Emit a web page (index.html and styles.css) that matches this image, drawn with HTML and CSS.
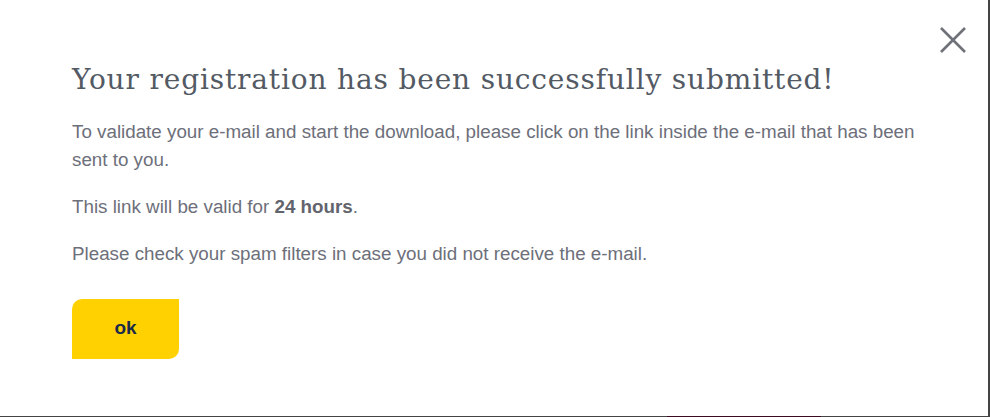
FILE: index.html
```html
<!DOCTYPE html>
<html lang="en">
<head>
<meta charset="utf-8">
<link rel="stylesheet" href="styles.css">
</head>
<body>
<div class="modal">
  <button class="close" aria-label="Close">
    <svg width="26" height="26" viewBox="0 0 26 26"><path d="M1 1 L25 25 M25 1 L1 25" stroke="#6f7178" stroke-width="2.6" fill="none"/></svg>
  </button>
  <h1 class="title">Your registration has been successfully submitted!</h1>
  <p class="text">To validate your e-mail and start the download, please click on the link inside the e-mail that has been sent to you.</p>
  <p class="text">This link will be valid for <strong>24 hours</strong>.</p>
  <p class="text">Please check your spam filters in case you did not receive the e-mail.</p>
  <button class="ok">ok</button>
</div>
</body>
</html>
```
FILE: styles.css
```css
html, body {
  margin: 0;
  padding: 0;
}
body {
  width: 990px;
  height: 417px;
  overflow: hidden;
  background: linear-gradient(to right, #444 667px, #3b0b22 667px, #3b0b22 821px, #444 821px);
}
.modal {
  position: relative;
  box-sizing: border-box;
  width: 988px;
  height: 416px;
  background: #fff;
  padding: 58px 72px 0 72px;
}
.close {
  position: absolute;
  top: 27px;
  right: 22px;
  border: 0;
  background: none;
  padding: 0;
  width: 26px;
  height: 26px;
  cursor: pointer;
}
.close svg { display: block; }
.title {
  margin: 0 0 16px 0;
  font-family: "DejaVu Serif", serif;
  font-weight: normal;
  font-size: 28px;
  letter-spacing: 0.85px;
  line-height: 44px;
  color: #535a64;
  white-space: nowrap;
}
.text {
  margin: 0 0 19px 0;
  font-family: "Liberation Sans", Arial, sans-serif;
  font-size: 18.8px;
  line-height: 28px;
  color: #6d6f7a;
}
.text strong {
  font-weight: bold;
  color: #62646d;
}
.ok {
  display: block;
  margin-top: 31px;
  width: 107px;
  height: 60px;
  border: 0;
  border-radius: 10px 0 10px 0;
  background: #ffd100;
  font-family: "Liberation Sans", Arial, sans-serif;
  font-weight: bold;
  font-size: 19px;
  color: #1b2a48;
  cursor: pointer;
  padding: 0 0 2px 0;
}
```
